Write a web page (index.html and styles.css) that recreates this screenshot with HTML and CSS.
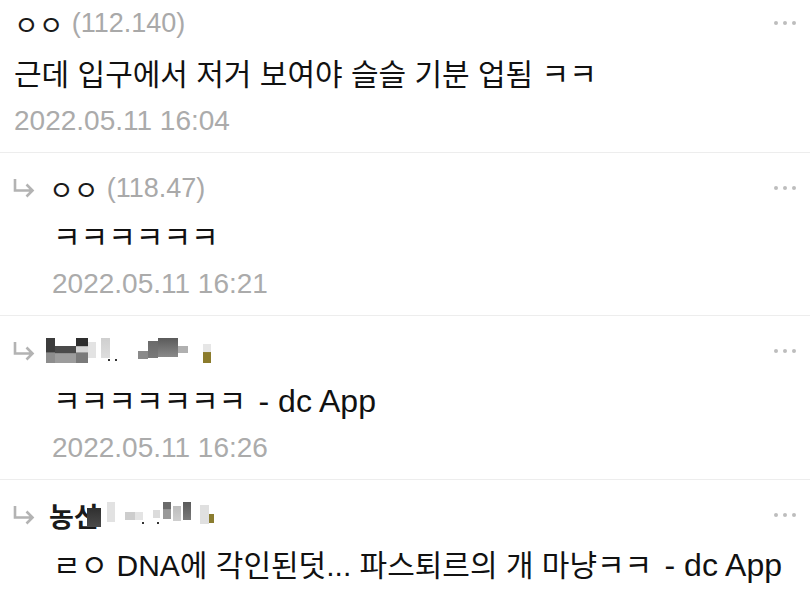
FILE: index.html
```html
<!doctype html>
<html lang="ko">
<head>
  <meta charset="UTF-8">
  <meta name="viewport" content="width=device-width, initial-scale=1.0">
  <title>댓글</title>
  <link rel="stylesheet" href="styles.css">
</head>
<body>
  <ul class="comments">
    <li class="comment">
      <div class="head">
        <span class="nick">ㅇㅇ</span>
        <span class="ip">(112.140)</span>
        <span class="more"><i></i><i></i><i></i></span>
      </div>
      <p class="text">근데 입구에서 저거 보여야 슬슬 기분 업됨 ㅋㅋ</p>
      <div class="date">2022.05.11 16:04</div>
    </li>

    <li class="comment reply">
      <div class="head">
        <svg class="arrow" viewBox="0 0 22 20"><path d="M2 1v11.5h17M13.5 6.5l6 6-6 6"/></svg>
        <span class="nick">ㅇㅇ</span>
        <span class="ip">(118.47)</span>
        <span class="more"><i></i><i></i><i></i></span>
      </div>
      <p class="text">ㅋㅋㅋㅋㅋㅋ</p>
      <div class="date">2022.05.11 16:21</div>
    </li>

    <li class="comment reply">
      <div class="head">
        <svg class="arrow" viewBox="0 0 22 20"><path d="M2 1v11.5h17M13.5 6.5l6 6-6 6"/></svg>
        <span class="mosaic mosaic-a"></span>
        <span class="more"><i></i><i></i><i></i></span>
      </div>
      <p class="text">ㅋㅋㅋㅋㅋㅋㅋ <span class="latin">- dc App</span></p>
      <div class="date">2022.05.11 16:26</div>
    </li>

    <li class="comment reply last">
      <div class="head">
        <svg class="arrow" viewBox="0 0 22 20"><path d="M2 1v11.5h17M13.5 6.5l6 6-6 6"/></svg>
        <span class="nick strong">농신</span>
        <span class="mosaic mosaic-b"></span>
        <span class="more"><i></i><i></i><i></i></span>
      </div>
      <p class="text">ㄹㅇ DNA에 각인된덧... 파스퇴르의 개 마냥ㅋㅋ <span class="latin">- dc App</span></p>
    </li>
  </ul>
</body>
</html>
```

FILE: styles.css
```css
body {
  margin: 0;
  background: #fff;
  color: #111;
  font-family: "Liberation Sans", "Noto Sans CJK KR", sans-serif;
  overflow: hidden;
}
.comments {
  list-style: none;
  margin: 0;
  padding: 0;
}
.comment {
  padding: 6px 14px 13px 14px;
  border-bottom: 1px solid #ededed;
}
.comment:first-child .text {
  margin-top: 15px;
}
.reply {
  padding-top: 18px;
}
.last {
  border-bottom: none;
}
.head {
  display: flex;
  align-items: center;
  height: 34px;
  font-size: 27px;
}
.nick {
  color: #1a1a1a;
  margin-right: 8px;
}
.nick.strong {
  font-weight: bold;
}
.ip {
  color: #a9a9a9;
}
.more {
  margin-left: auto;
  display: flex;
  gap: 5px;
}
.more i {
  width: 4px;
  height: 4px;
  border-radius: 50%;
  background: #bdbdbd;
}
.arrow {
  width: 22px;
  height: 20px;
  margin-right: 14px;
  margin-left: -1px;
  fill: none;
  stroke: #b3b3b3;
  stroke-width: 2.6;
}
.text {
  margin: 13px 0 0;
  font-size: 30px;
  line-height: 40px;
  white-space: nowrap;
}
/* app signature renders a touch larger than the body text */
.latin {
  font-size: 32px;
  margin-left: 4px;
}
.date {
  margin-top: 8px;
  font-size: 28px;
  line-height: 36px;
  color: #ababab;
}
.reply .date {
  padding-left: 38px;
}
.reply .text {
  padding-left: 39px;
}
.mosaic {
  display: block;
  height: 26px;
  background-repeat: no-repeat;
}
.mosaic-a {
  width: 166px;
  margin-left: -3px;
  background-image:
    linear-gradient(#3c3c3c 55%, #8d8d8d 60%),
    linear-gradient(#4a4a4a 40%, #9c9c9c 45%),
    linear-gradient(#2e2e2e 30%, #d6d6d6 35%, #d6d6d6 55%, #7a7a7a 60%),
    linear-gradient(#e3e3e3, #e3e3e3),
    linear-gradient(#cfcfcf, #dedede),
    linear-gradient(#333, #333),
    linear-gradient(#333, #333),
    linear-gradient(#8a8a8a, #8a8a8a),
    linear-gradient(#6a6a6a, #7a7a7a),
    linear-gradient(#5a5a5a, #8a8a8a),
    linear-gradient(#b0b0b0, #b0b0b0),
    linear-gradient(#e6e6e6 40%, #8b7b2c 45%);
  background-position:
    0 0, 9px 8px, 30px 0, 42px 4px, 55px 0, 62px 21px, 69px 21px,
    92px 13px, 102px 3px, 112px 0, 132px 8px, 157px 6px;
  background-size:
    9px 25px, 21px 17px, 12px 25px, 8px 16px, 9px 20px, 2px 2px, 2px 2px,
    10px 8px, 10px 17px, 20px 19px, 10px 7px, 8px 19px;
}
.mosaic-b {
  width: 130px;
  margin-left: -20px;
  background-image:
    linear-gradient(#2f2f2f, #4a4a4a),
    linear-gradient(#e2e2e2, #e2e2e2),
    linear-gradient(#cdcdcd, #cdcdcd),
    linear-gradient(#e4e4e4, #e4e4e4),
    linear-gradient(#333, #333),
    linear-gradient(#333, #333),
    linear-gradient(#dcdcdc, #dcdcdc),
    linear-gradient(#6a6a6a 40%, #9a9a9a 45%),
    linear-gradient(#bdbdbd, #cfcfcf),
    linear-gradient(#5a5a5a, #7a7a7a),
    linear-gradient(#e0e0e0, #e0e0e0),
    linear-gradient(#8b7d30, #8b7d30);
  background-position:
    0 6px, 20px 0, 38px 10px, 48px 10px, 55px 20px, 70px 20px,
    66px 8px, 76px 0, 86px 4px, 96px 0, 113px 3px, 118px 12px;
  background-size:
    14px 19px, 8px 20px, 10px 8px, 8px 8px, 2px 2px, 2px 2px,
    7px 8px, 8px 17px, 8px 15px, 8px 18px, 9px 19px, 9px 9px;
}
```
